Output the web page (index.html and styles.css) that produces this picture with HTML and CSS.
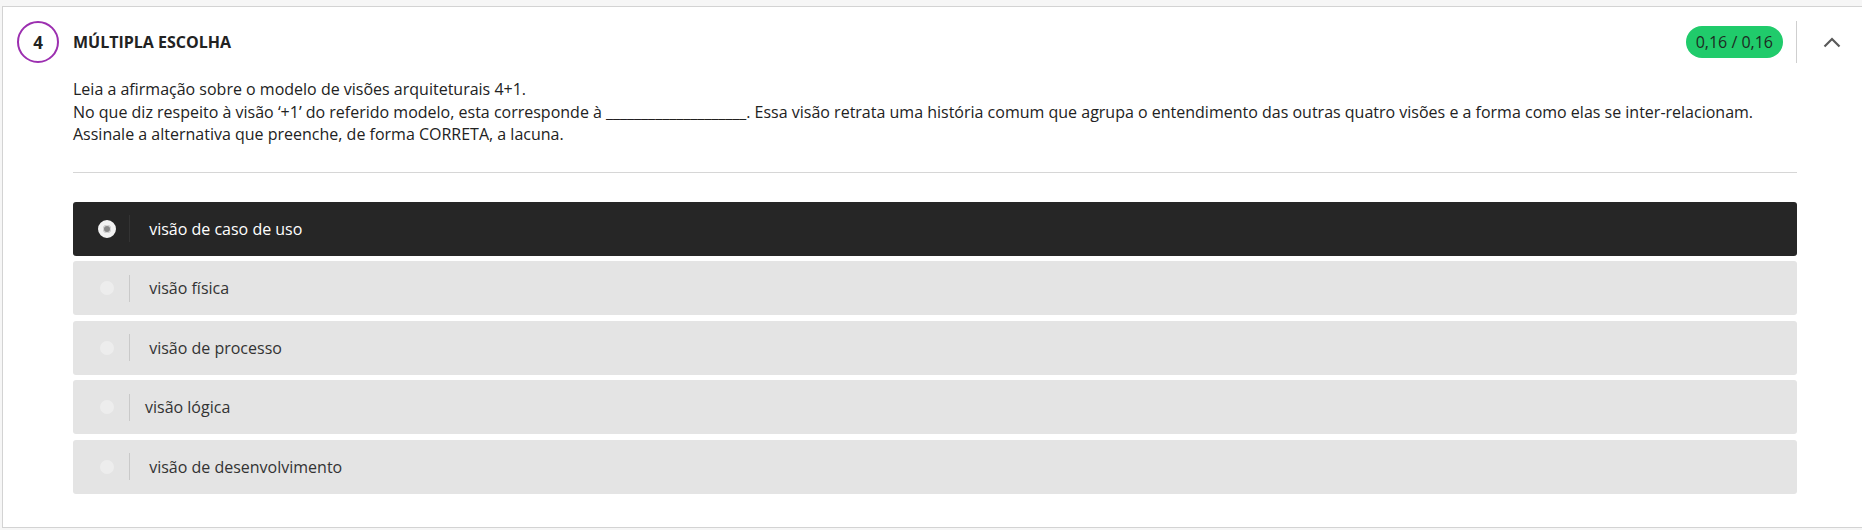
FILE: index.html
```html
<!DOCTYPE html>
<html lang="pt">
<head>
<meta charset="utf-8">
<title>Questão 4</title>
<link rel="stylesheet" href="styles.css">
</head>
<body>
<section class="card">
  <header class="q-header">
    <div class="q-number">4</div>
    <h2 class="q-type">MÚLTIPLA ESCOLHA</h2>
    <div class="q-right">
      <span class="score">0,16 / 0,16</span>
      <span class="vdiv"></span>
      <button class="toggle" aria-label="Recolher">
        <svg width="18" height="11" viewBox="0 0 18 11"><polyline points="1.5,9.5 9,2 16.5,9.5" fill="none" stroke="#5a5a5a" stroke-width="2.2"/></svg>
      </button>
    </div>
  </header>
  <div class="q-body">
    <p class="statement">Leia a afirmação sobre o modelo de visões arquiteturais 4+1.<br>No que diz respeito à visão ‘+1’ do referido modelo, esta corresponde à ____________________. Essa visão retrata uma história comum que agrupa o entendimento das outras quatro visões e a forma como elas se inter-relacionam.<br>Assinale a alternativa que preenche, de forma CORRETA, a lacuna.</p>
    <hr class="sep">
    <ul class="options">
      <li class="option selected"><span class="radio-wrap"><span class="radio"></span></span><span class="odiv"></span><span class="otext">&nbsp;visão de caso de uso</span></li>
      <li class="option"><span class="radio-wrap"><span class="radio"></span></span><span class="odiv"></span><span class="otext">&nbsp;visão física</span></li>
      <li class="option"><span class="radio-wrap"><span class="radio"></span></span><span class="odiv"></span><span class="otext">&nbsp;visão de processo</span></li>
      <li class="option"><span class="radio-wrap"><span class="radio"></span></span><span class="odiv"></span><span class="otext">visão lógica</span></li>
      <li class="option"><span class="radio-wrap"><span class="radio"></span></span><span class="odiv"></span><span class="otext">&nbsp;visão de desenvolvimento</span></li>
    </ul>
  </div>
</section>
</body>
</html>
```
FILE: styles.css
```css
* { box-sizing: border-box; }
html, body { height: 100%; }
body {
  margin: 0;
  padding: 6px 0 0 2px;
  background: #f6f6f6;
  font-family: "Open Sans", "Noto Sans", sans-serif;
  color: #222;
  overflow: hidden;
}
.card {
  width: 1861px;
  height: 522px;
  background: #fff;
  border: 1px solid #d3d3d3;
}
.q-header {
  display: flex;
  align-items: center;
  padding: 14px 21px 0 14px;
}
.q-number {
  width: 42px;
  height: 42px;
  border: 2px solid #9c2fb0;
  border-radius: 50%;
  display: flex;
  align-items: center;
  justify-content: center;
  font-weight: 700;
  font-size: 17px;
  color: #222;
}
.q-type {
  margin: 0 0 0 14px;
  font-size: 16px;
  font-weight: 700;
  color: #222;
  flex: 1;
}
.q-right {
  display: flex;
  align-items: center;
}
.score {
  height: 32px;
  padding: 0 10px;
  border-radius: 16px;
  background: #20cb6b;
  color: #1d2a22;
  font-size: 16px;
  display: flex;
  align-items: center;
}
.vdiv {
  width: 1px;
  height: 42px;
  background: #cfcfcf;
  margin: 0 0 0 13px;
}
.toggle {
  border: 0;
  background: none;
  padding: 0;
  margin-left: 26px;
  width: 18px;
  height: 11px;
  display: flex;
}
.q-body {
  padding: 15px 65px 0 70px;
}
.statement {
  margin: 0;
  font-size: 16px;
  line-height: 22.5px;
  color: #222;
}
.sep {
  margin: 26px 0 0 0;
  border: 0;
  border-top: 1px solid #d6d6d6;
  height: 0;
}
.options {
  list-style: none;
  margin: 29px 0 0 0;
  padding: 0;
  display: flex;
  flex-direction: column;
  gap: 5.5px;
}
.option {
  height: 54px;
  border-radius: 3px;
  background: #e4e4e4;
  display: flex;
  align-items: center;
  padding-left: 25px;
  color: #333;
  font-size: 16px;
}
.option.selected {
  background: #262626;
  color: #fff;
}
.radio-wrap {
  width: 18px;
  height: 18px;
  display: flex;
  align-items: center;
  justify-content: center;
}
.radio {
  width: 14px;
  height: 14px;
  border-radius: 50%;
  background: #ededed;
}
.selected .radio {
  width: 18px;
  height: 18px;
  background: #888;
  border: 5.5px solid #f2f2f2;
  box-shadow: 0 0 0 1px #d8d8d8 inset;
}
.odiv {
  width: 1px;
  height: 27px;
  background: #c9c9c9;
  margin-left: 13px;
  margin-right: 15px;
}
.selected .odiv { background: #333; }
.otext { white-space: pre; }
```
